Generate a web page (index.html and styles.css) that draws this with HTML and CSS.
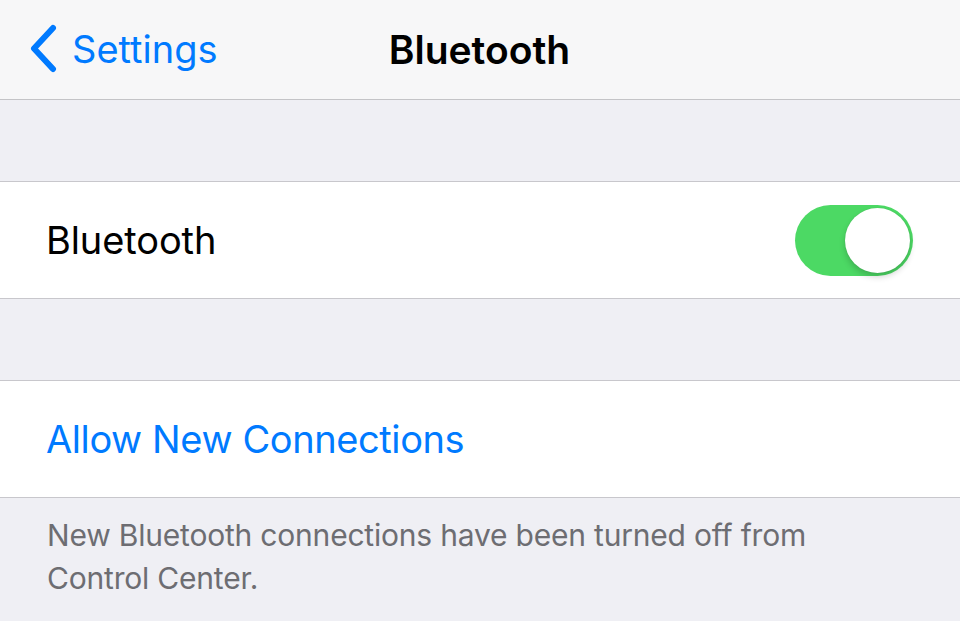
FILE: index.html
```html
<!DOCTYPE html>
<html>
<head>
<meta charset="utf-8">
<link rel="stylesheet" href="styles.css">
</head>
<body>
<div class="nav">
  <div class="back">
    <svg class="chev" width="30" height="50" viewBox="0 0 30 50"><path d="M25 4 L6 24.5 L25 45" fill="none" stroke="#007aff" stroke-width="6" stroke-linecap="round" stroke-linejoin="round"/></svg>
    <span class="back-label">Settings</span>
  </div>
  <div class="title">Bluetooth</div>
</div>
<div class="gap"></div>
<div class="group">
  <div class="row">
    <span class="label">Bluetooth</span>
    <div class="toggle"><div class="knob"></div></div>
  </div>
</div>
<div class="gap"></div>
<div class="group">
  <div class="row">
    <span class="label link">Allow New Connections</span>
  </div>
</div>
<div class="footer">New Bluetooth connections have been turned off from<br>Control Center.</div>
</body>
</html>
```
FILE: styles.css
```css
html, body { margin: 0; padding: 0; }
body {
  background: #efeff4;
  font-family: Inter, "Noto Sans", sans-serif;
  width: 960px;
  height: 621px;
  overflow: hidden;
}
.nav {
  height: 99px;
  background: #f7f7f8;
  border-bottom: 1px solid #c4c4c7;
  position: relative;
  display: flex;
  align-items: center;
  justify-content: center;
}
.back {
  position: absolute;
  left: 28px;
  top: 24px;
  display: flex;
  align-items: center;
  gap: 14px;
}
.chev { display: block; }
.back-label {
  color: #007aff;
  font-size: 38px;
  letter-spacing: 0;
}
.title {
  font-size: 39px;
  font-weight: 600;
  color: #000;
  letter-spacing: 0;
  margin-left: -1px;
}
.gap { height: 81px; }
.group {
  background: #fff;
  border-top: 1px solid #c8c7cc;
  border-bottom: 1px solid #c8c7cc;
}
.row {
  height: 116px;
  display: flex;
  align-items: center;
  justify-content: space-between;
  padding: 0 47px 0 46px;
}
.label {
  font-size: 38px;
  color: #000;
  letter-spacing: -0.1px;
}
.label.link { color: #007aff; letter-spacing: -0.4px; }
.toggle {
  width: 118px;
  height: 71px;
  border-radius: 36px;
  background: #4cd964;
  position: relative;
}
.knob {
  position: absolute;
  right: 3px;
  top: 3px;
  width: 65px;
  height: 65px;
  border-radius: 50%;
  background: #fff;
  box-shadow: 0 4px 6px rgba(0,0,0,0.18), 0 0 1px rgba(0,0,0,0.15);
}
.footer {
  padding: 16px 47px 0 47px;
  font-size: 30px;
  line-height: 43px;
  color: #6d6d72;
  letter-spacing: -0.2px;
}
```
